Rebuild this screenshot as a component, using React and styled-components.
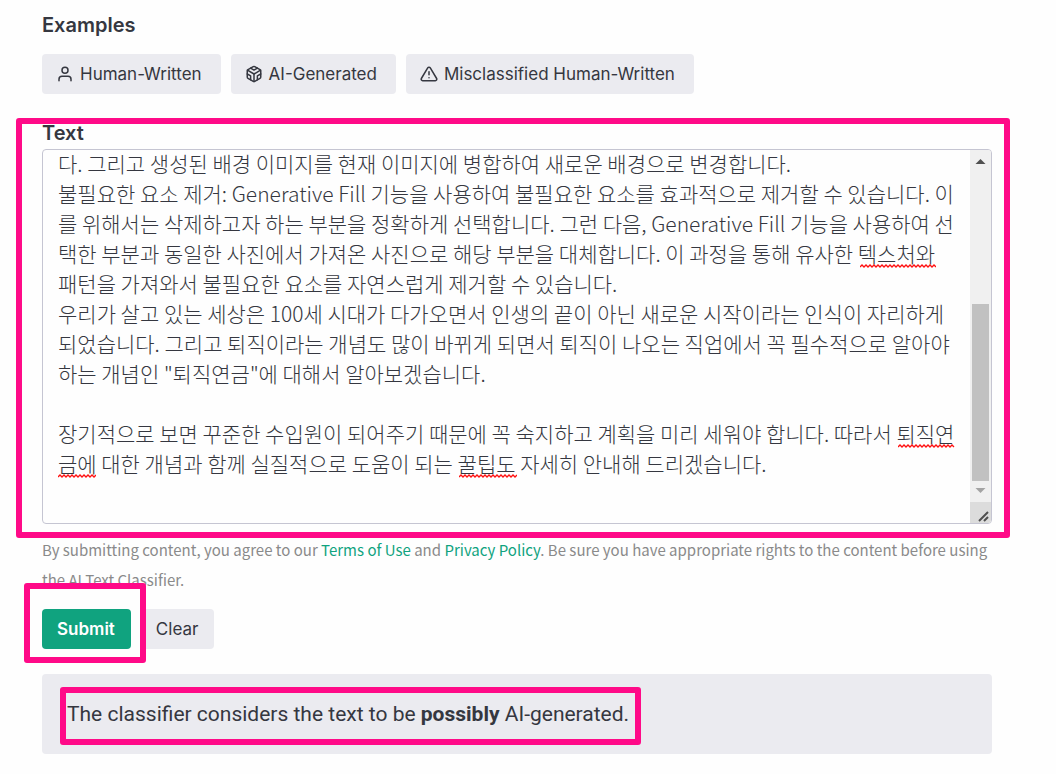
import React from 'react';
import styled, { createGlobalStyle } from 'styled-components';
import { FiUser, FiCodesandbox, FiAlertTriangle } from 'react-icons/fi';

const PINK = '#ff0a88';

const GlobalStyle = createGlobalStyle`
  *, *::before, *::after { box-sizing: border-box; }
  body {
    margin: 0;
    background: #fefefe;
    color: #353740;
    font-family: Inter, "Noto Sans CJK KR", sans-serif;
    font-size: 17px;
  }
`;

const Page = styled.main`
  display: flex;
  flex-direction: column;
  padding: 10px 64px 20px 42px;
`;

const Heading = styled.h2`
  margin: 0 0 14px;
  font-size: 20px;
  font-weight: 600;
  line-height: 30px;
`;

const ButtonRow = styled.div`
  display: flex;
  flex-wrap: wrap;
  gap: 10px;
`;

const Button = styled.button`
  display: inline-flex;
  align-items: center;
  height: 40px;
  padding: 0 16px 0 15px;
  border: 0;
  border-radius: 4px;
  background: ${(p) => (p.$primary ? '#10a37f' : '#ebebf0')};
  color: ${(p) => (p.$primary ? '#ffffff' : '#353740')};
  font: inherit;
  font-weight: ${(p) => (p.$primary ? 600 : 400)};
  cursor: pointer;
`;

const ExampleButton = styled(Button)`
  gap: 6px;
  padding: 0 19px 0 14px;
`;

const Field = styled.section`
  position: relative;
  display: flex;
  flex-direction: column;
  margin-top: 24px;
`;

const Label = styled.label`
  font-size: 20px;
  font-weight: 600;
  line-height: 30px;
`;

const TextFrame = styled.div`
  position: relative;
  display: flex;
  height: 375px;
  margin-top: 1px;
  border: 1px solid #c5c5d2;
  border-radius: 4px;
  overflow: hidden;
`;

const TextArea = styled.textarea`
  flex: 1;
  min-width: 0;
  margin: -2px 0 0;
  padding: 0 0 0 15px;
  border: 0;
  outline: 0;
  resize: none;
  overflow: hidden;
  white-space: pre;
  background: transparent;
  color: #353740;
  font-family: "Noto Sans CJK KR", sans-serif;
  font-size: 21px;
  font-weight: 300;
  line-height: 30px;
`;

const ScrollBar = styled.div`
  display: flex;
  flex-direction: column;
  width: 21px;
  background: #f0f0f0;
`;

const ScrollArrow = styled.svg`
  width: 21px;
  height: 21px;
  fill: ${(p) => (p.$dim ? '#a3a3a3' : '#505050')};
`;

const Track = styled.div`
  flex: 1;
  display: flex;
  flex-direction: column;
  justify-content: flex-end;
  padding: 0 2px;
`;

const Thumb = styled.div`
  height: 57%;
  background: #c1c1c1;
`;

const Resizer = styled.svg`
  width: 21px;
  height: 21px;
  background: #dcdcdc;
  stroke: #505050;
  stroke-width: 2;
`;

const Squiggle = styled.svg`
  position: absolute;
  top: ${(p) => p.$line * 30 - 6}px;
  left: ${(p) => p.$start}px;
  width: ${(p) => p.$width}px;
  height: 4px;
  fill: none;
  stroke: #ff1010;
  stroke-width: 1.3;
  pointer-events: none;
`;

const Notice = styled.p`
  margin: 11px 0 14px;
  color: #8a8a8a;
  font-family: "Noto Sans CJK KR", sans-serif;
  font-size: 15px;
  line-height: 30px;
`;

const Link = styled.a`
  color: #10a37f;
  text-decoration: none;
`;

const SubmitSlot = styled.div`
  position: relative;
  display: flex;
`;

const Result = styled.section`
  display: flex;
  align-items: center;
  height: 80px;
  margin-top: 25px;
  padding: 0 25px;
  border-radius: 4px;
  background: #ebebf0;
  font-family: Roboto, sans-serif;
  font-size: 21px;
`;

const ResultText = styled.p`
  position: relative;
  margin: 0;
  line-height: 30px;
`;

const Marker = styled.span`
  position: absolute;
  inset: ${(p) => p.$inset};
  z-index: 1;
  border: 6px solid ${PINK};
  border-radius: 3px;
  pointer-events: none;
`;

const CONTENT = [
  '다. 그리고 생성된 배경 이미지를 현재 이미지에 병합하여 새로운 배경으로 변경합니다.',
  '불필요한 요소 제거: Generative Fill 기능을 사용하여 불필요한 요소를 효과적으로 제거할 수 있습니다. 이',
  '를 위해서는 삭제하고자 하는 부분을 정확하게 선택합니다. 그런 다음, Generative Fill 기능을 사용하여 선',
  '택한 부분과 동일한 사진에서 가져온 사진으로 해당 부분을 대체합니다. 이 과정을 통해 유사한 텍스처와',
  '패턴을 가져와서 불필요한 요소를 자연스럽게 제거할 수 있습니다.',
  '우리가 살고 있는 세상은 100세 시대가 다가오면서 인생의 끝이 아닌 새로운 시작이라는 인식이 자리하게',
  '되었습니다. 그리고 퇴직이라는 개념도 많이 바뀌게 되면서 퇴직이 나오는 직업에서 꼭 필수적으로 알아야',
  '하는 개념인 "퇴직연금"에 대해서 알아보겠습니다.',
  '',
  '장기적으로 보면 꾸준한 수입원이 되어주기 때문에 꼭 숙지하고 계획을 미리 세워야 합니다. 따라서 퇴직연',
  '금에 대한 개념과 함께 실질적으로 도움이 되는 꿀팁도 자세히 안내해 드리겠습니다.',
].join('\n');

const MISSPELLED = [
  { line: 4, start: 817, width: 76 },
  { line: 10, start: 855, width: 57 },
  { line: 11, start: 15, width: 38 },
  { line: 11, start: 416, width: 58 },
];

const wave = (width) => {
  let d = 'M0 3';
  for (let x = 2; x <= width; x += 2) d += ` L${x} ${x % 4 === 0 ? 3 : 1}`;
  return d;
};

export default function App() {
  return (
    <>
      <GlobalStyle />
      <Page>
        <Heading>Examples</Heading>
        <ButtonRow>
          <ExampleButton type="button"><FiUser size={18} />Human-Written</ExampleButton>
          <ExampleButton type="button"><FiCodesandbox size={18} />AI-Generated</ExampleButton>
          <ExampleButton type="button"><FiAlertTriangle size={18} />Misclassified Human-Written</ExampleButton>
        </ButtonRow>

        <Field>
          <Label htmlFor="text">Text</Label>
          <TextFrame>
            <TextArea id="text" spellCheck={false} defaultValue={CONTENT} />
            {MISSPELLED.map((m) => (
              <Squiggle key={m.start} $line={m.line} $start={m.start} $width={m.width} aria-hidden="true">
                <path d={wave(m.width)} />
              </Squiggle>
            ))}
            <ScrollBar aria-hidden="true">
              <ScrollArrow viewBox="0 0 21 21"><path d="M5.500 14h10l-5-5z" /></ScrollArrow>
              <Track><Thumb /></Track>
              <ScrollArrow viewBox="0 0 21 21" $dim><path d="M5.500 7h10l-5 5z" /></ScrollArrow>
              <Resizer viewBox="0 0 21 21"><path d="M9 19L18 10M14 19L18 15" /></Resizer>
            </ScrollBar>
          </TextFrame>
          <Marker $inset="0 -18px -14px -26px" />
        </Field>

        <Notice>
          By submitting content, you agree to our <Link href="#terms">Terms of Use</Link> and{' '}
          <Link href="#privacy">Privacy Policy</Link>. Be sure you have appropriate rights to the
          content before using the AI Text Classifier.
        </Notice>

        <ButtonRow>
          <SubmitSlot>
            <Button type="submit" $primary>Submit</Button>
            <Marker $inset="-26px -15px -14px -18px" />
          </SubmitSlot>
          <Button type="button">Clear</Button>
        </ButtonRow>

        <Result>
          <ResultText>
            The classifier considers the text to be <strong>possibly</strong> AI-generated.
            <Marker $inset="-12px -12px -16px -7px" />
          </ResultText>
        </Result>
      </Page>
    </>
  );
}
